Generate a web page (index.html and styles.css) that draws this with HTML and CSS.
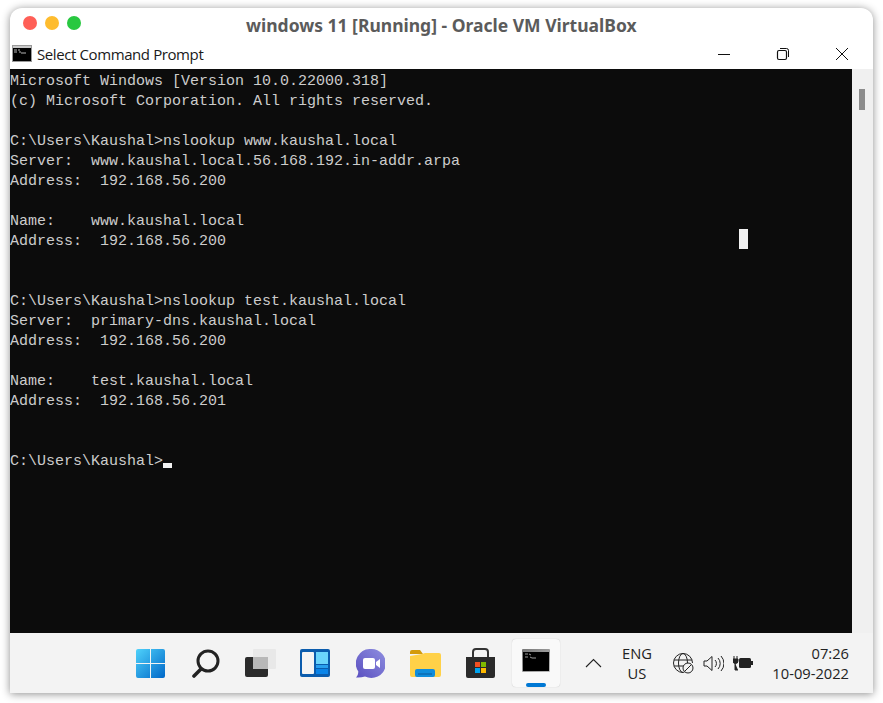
FILE: index.html
```html
<!DOCTYPE html>
<html lang="en">
<head>
<meta charset="utf-8">
<title>windows 11 [Running] - Oracle VM VirtualBox</title>
<link rel="stylesheet" href="styles.css">
</head>
<body>
<div class="window">
  <header class="host-bar">
    <div class="lights"><i class="light red"></i><i class="light amber"></i><i class="light green"></i></div>
    <h1 class="host-title">windows 11 [Running] - Oracle VM VirtualBox</h1>
  </header>
  <div class="cmd-bar">
    <svg class="cmd-icon" width="20" height="17" viewBox="0 0 20 17"><rect x=".5" y=".5" width="19" height="16" fill="#000" stroke="#9a9a9a"/><rect x="1" y="1" width="18" height="2" fill="#c9c9c9"/><path d="M2 5h3M2 7h3M6 5h2M7 7h2M9 8h5" stroke="#b5b5b5" fill="none"/></svg>
    <span class="cmd-title">Select Command Prompt</span>
    <div class="win-controls">
      <svg width="14" height="14" viewBox="0 0 14 14"><path d="M1 7.500h12" stroke="#111" fill="none"/></svg>
      <svg width="14" height="14" viewBox="0 0 14 14"><rect x="1.500" y="3.500" width="9" height="9" rx="1.500" fill="none" stroke="#111" stroke-width="1.200"/><path d="M4 1.500h6.500a2 2 0 0 1 2 2V10" fill="none" stroke="#111"/></svg>
      <svg width="14" height="14" viewBox="0 0 14 14"><path d="M1 1l12 12M13 1L1 13" stroke="#111" fill="none"/></svg>
    </div>
  </div>
  <main class="console-row">
    <pre class="console">Microsoft Windows [Version 10.0.22000.318]
(c) Microsoft Corporation. All rights reserved.

C:\Users\Kaushal&gt;nslookup www.kaushal.local
Server:  www.kaushal.local.56.168.192.in-addr.arpa
Address:  192.168.56.200

Name:    www.kaushal.local
Address:  192.168.56.200


C:\Users\Kaushal&gt;nslookup test.kaushal.local
Server:  primary-dns.kaushal.local
Address:  192.168.56.200

Name:    test.kaushal.local
Address:  192.168.56.201


C:\Users\Kaushal&gt;<span class="caret"></span></pre>
    <span class="mouse-block"></span>
    <div class="scrollbar"><span class="thumb"></span></div>
  </main>
  <footer class="taskbar">
    <div class="apps">
      <div class="app"><svg width="29" height="29" viewBox="0 0 29 29"><defs><linearGradient id="s" x1="0" y1="0" x2="1" y2="1"><stop offset="0" stop-color="#4fd2fb"/><stop offset="1" stop-color="#0067c8"/></linearGradient></defs><path d="M0 2a2 2 0 0 1 2-2h12v14H0zM15 0h12a2 2 0 0 1 2 2v12H15zM0 15h14v14H2a2 2 0 0 1-2-2zM15 15h14v12a2 2 0 0 1-2 2H15z" fill="url(#s)"/></svg></div>
      <div class="app"><svg class="nudge" width="28" height="29" viewBox="0 0 28 29"><circle cx="16" cy="12" r="10" fill="none" stroke="#222" stroke-width="3"/><path d="M9 20l-7 7" stroke="#222" stroke-width="3.600" stroke-linecap="round"/></svg></div>
      <div class="app"><svg class="nudge" width="31" height="28" viewBox="0 0 31 28"><rect x="8" width="23" height="20" rx="1" fill="#e8e8e8"/><rect y="8" width="23" height="20" rx="2" fill="#2b2b2b"/><rect x="8" y="8" width="15" height="12" fill="#b8b8b8"/></svg></div>
      <div class="app"><svg width="30" height="28" viewBox="0 0 30 28"><rect width="30" height="28" rx="2" fill="#0b5cad"/><rect x="2" y="3" width="12" height="22" rx="1" fill="#f4f4f4"/><rect x="16" y="3" width="12" height="12" fill="#6bd5fb"/><rect x="16" y="16" width="12" height="3" fill="#29a0ee"/><rect x="16" y="20" width="12" height="5" fill="#0a84e8"/></svg></div>
      <div class="app"><svg width="29" height="29" viewBox="0 0 29 29"><defs><linearGradient id="c" x1="0" y1="1" x2="1" y2="0"><stop offset="0" stop-color="#5a4fc0"/><stop offset="1" stop-color="#8f8fe0"/></linearGradient></defs><path d="M15 0a14.500 14.500 0 1 1-6 27.500C6 28.500 3 28.800 0 28.500c1.500-1.500 2.300-3.500 2.300-6A14.500 14.500 0 0 1 15 0z" fill="url(#c)"/><rect x="7" y="9" width="12" height="11" rx="2" fill="#fff"/><path d="M20 13l4-3v9l-4-3z" fill="#fff"/></svg></div>
      <div class="app"><svg width="31" height="27" viewBox="0 0 31 27"><path d="M0 2a2 2 0 0 1 2-2h8l3 4h-13z" fill="#d49b0b"/><path d="M0 6l12-2 3-1h14a2 2 0 0 1 2 2v20a2 2 0 0 1-2 2H2a2 2 0 0 1-2-2z" fill="#ffd148"/><rect x="5" y="19" width="20" height="8" rx="2" fill="#0f8ddc"/><path d="M8 24h14" stroke="#0a5a9c"/></svg></div>
      <div class="app"><svg class="nudge" width="29" height="30" viewBox="0 0 29 30"><path d="M7 9V4a3 3 0 0 1 3-3h9a3 3 0 0 1 3 3v5" fill="none" stroke="#333" stroke-width="2"/><path d="M0 9h29v19a2 2 0 0 1-2 2H2a2 2 0 0 1-2-2z" fill="#2a2a2a"/><rect x="9" y="14" width="5" height="5" fill="#f25022"/><rect x="15" y="14" width="5" height="5" fill="#7fba00"/><rect x="9" y="20" width="5" height="5" fill="#00a4ef"/><rect x="15" y="20" width="5" height="5" fill="#ffb900"/></svg></div>
      <div class="app active"><svg width="28" height="23" viewBox="0 0 28 23"><defs><linearGradient id="t" x1="0" y1="0" x2="1" y2="1"><stop offset="0" stop-color="#777"/><stop offset="1" stop-color="#bbb"/></linearGradient></defs><rect width="28" height="23" rx="1" fill="url(#t)"/><rect x="1" y="3" width="26" height="19" fill="#000"/><path d="M3 5h3M3 8h3M7 5l2 1M8 8l2 1h4" stroke="#999" fill="none"/></svg><span class="indicator"></span></div>
    </div>
    <div class="tray">
      <svg class="chevron" width="17" height="10" viewBox="0 0 17 10"><path d="M1 9l7.500-7.500L16 9" fill="none" stroke="#222" stroke-width="1.100"/></svg>
      <div class="lang"><span>ENG</span><span>US</span></div>
      <div class="status">
        <svg width="21" height="21" viewBox="0 0 21 21"><g fill="none" stroke="#222"><path d="M10 19.500a9.500 9.500 0 1 1 9.500-9.500"/><ellipse cx="10" cy="10" rx="4.500" ry="9.500"/><path d="M1 7h18M1 13h10"/><circle cx="15" cy="15" r="5" fill="#f3f3f3"/><path d="M12 18l6-6"/></g></svg>
        <svg width="21" height="17" viewBox="0 0 21 17"><g fill="none" stroke="#222"><path d="M1 6h3l5-4.500v14L4 11H1z"/><path d="M12 5a5 5 0 0 1 0 7M15 3a8 8 0 0 1 0 11M18 1a11 11 0 0 1 0 15"/></g></svg>
        <svg width="20" height="15" viewBox="0 0 20 15"><path d="M1 0v3M4 0v3M0 3h5v2a2.500 2.500 0 0 1-5 0zM2 7v7h3" fill="#222" stroke="#222"/><rect x="6" y="2" width="12" height="10" rx="1.500" fill="#222"/><rect x="18" y="5" width="2" height="4" fill="#222"/></svg>
      </div>
      <div class="clock"><span>07:26</span><span>10-09-2022</span></div>
    </div>
  </footer>
</div>
</body>
</html>
```
FILE: styles.css
```css
html, body { margin: 0; padding: 0; }
body {
  width: 883px;
  height: 703px;
  background: #fff;
  overflow: hidden;
  box-sizing: border-box;
  padding: 8px 10px 10px;
}
.window {
  height: 685px;
  display: flex;
  flex-direction: column;
  background: #fff;
  border-radius: 12px 12px 0 0;
  box-shadow: 0 1px 9px rgba(0, 0, 0, .45);
  overflow: hidden;
}
.host-bar {
  height: 29px;
  flex: none;
  display: flex;
  align-items: center;
  position: relative;
  padding-left: 13px;
}
.lights { display: flex; gap: 8px; }
.light { width: 14px; height: 14px; border-radius: 50%; display: block; }
.red { background: #ff5f57; }
.amber { background: #febc2e; }
.green { background: #28c840; }
.host-title {
  position: absolute;
  left: 236px;
  top: 5px;
  margin: 0;
  font: 700 17.500px/24px "Noto Sans", sans-serif;
  color: #5b5b5b;
  white-space: nowrap;
}
.cmd-bar {
  height: 32px;
  flex: none;
  display: flex;
  align-items: center;
  padding: 1px 24px 0 2px;
  box-sizing: border-box;
}
.cmd-icon { margin-right: 5px; }
.cmd-title {
  font: 400 15px/20px "Open Sans", sans-serif;
  letter-spacing: -.4px;
  color: #1a1a1a;
}
.win-controls {
  margin-left: auto;
  display: flex;
  gap: 45px;
}
.console-row {
  height: 564px;
  flex: none;
  display: flex;
  position: relative;
}
.console {
  flex: 1;
  margin: 0;
  padding-top: 3px;
  background: #0c0c0c;
  color: #cccccc;
  font: 400 15px/20px "Liberation Mono", monospace;
}
.caret {
  display: inline-block;
  width: 9px;
  height: 5px;
  background: #f2f2f2;
  vertical-align: -3px;
}
.mouse-block {
  position: absolute;
  left: 729px;
  top: 160px;
  width: 9px;
  height: 20px;
  background: #f2f2f2;
}
.scrollbar {
  width: 21px;
  flex: none;
  background: #f0f0f0;
  padding: 20px 0 0 7px;
  box-sizing: border-box;
}
.thumb { display: block; width: 6px; height: 21px; background: #8c8c8c; }
.taskbar {
  height: 60px;
  flex: none;
  display: flex;
  align-items: center;
  background: #f3f3f3;
  padding-left: 112.500px;
  box-sizing: border-box;
}
.apps { display: flex; align-items: center; }
.app {
  width: 55px;
  height: 48px;
  display: flex;
  align-items: center;
  justify-content: center;
  position: relative;
}
.nudge { margin-left: 1px; }
.active {
  width: 48px;
  margin-left: 4.500px;
  background: #f9f9f9;
  border-radius: 4px;
  box-shadow: 0 0 1px rgba(0, 0, 0, .25);
}
.active svg { margin-bottom: 6px; }
.indicator {
  position: absolute;
  left: 14px;
  bottom: 0;
  width: 20px;
  height: 4px;
  border-radius: 2px;
  background: #0078d4;
}
.tray {
  flex: 1;
  display: flex;
  align-items: center;
  font: 400 14.700px/20px "Open Sans", sans-serif;
  color: #222;
  padding-left: 25px;
}
.chevron { flex: none; }
.lang {
  display: flex;
  flex-direction: column;
  align-items: center;
  margin-left: 20px;
}
.status {
  display: flex;
  align-items: center;
  gap: 9px;
  margin-left: 21px;
}
.clock {
  display: flex;
  flex-direction: column;
  align-items: flex-end;
  margin-left: auto;
  padding-right: 24px;
}
```
